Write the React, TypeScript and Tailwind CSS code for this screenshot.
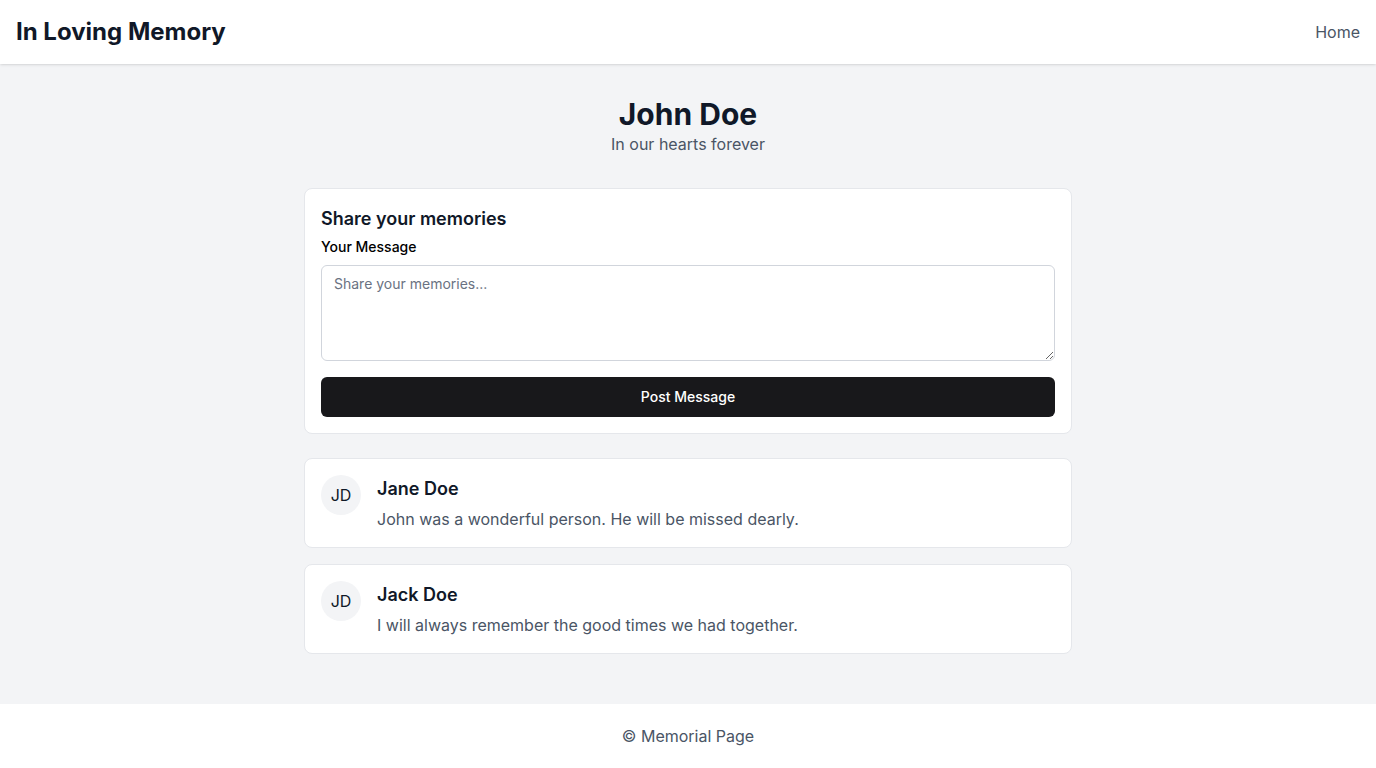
import React, { useState } from 'react';

interface Memory {
  id: number;
  name: string;
  initials: string;
  text: string;
}

const initialMemories: Memory[] = [
  { id: 1, name: 'Jane Doe', initials: 'JD', text: 'John was a wonderful person. He will be missed dearly.' },
  { id: 2, name: 'Jack Doe', initials: 'JD', text: 'I will always remember the good times we had together.' },
];

const App: React.FC = () => {
  const [message, setMessage] = useState<string>('');
  const [memories, setMemories] = useState<Memory[]>(initialMemories);

  const handleSubmit = (e: React.FormEvent) => {
    e.preventDefault();
    if (!message.trim()) return;
    setMemories([...memories, { id: Date.now(), name: 'Guest', initials: 'G', text: message }]);
    setMessage('');
  };

  return (
    <div className="min-h-screen flex flex-col bg-gray-100 font-['Inter',sans-serif]">
      <header className="h-16 bg-white shadow flex items-center justify-between px-4">
        <h1 className="text-2xl font-bold text-gray-900">In Loving Memory</h1>
        <nav>
          <a href="#" className="text-gray-600 hover:text-gray-900">Home</a>
        </nav>
      </header>

      <main className="flex-1 py-8 px-4">
        <div className="max-w-3xl mx-auto">
          <div className="text-center mb-8">
            <h2 className="text-3xl font-bold text-gray-900">John Doe</h2>
            <p className="text-gray-600">In our hearts forever</p>
          </div>

          <form onSubmit={handleSubmit} className="bg-white border border-gray-200 rounded-lg p-4">
            <h3 className="text-lg font-semibold text-gray-900">Share your memories</h3>
            <label htmlFor="message" className="block text-sm font-medium text-black mt-1 mb-2">
              Your Message
            </label>
            <textarea
              id="message"
              value={message}
              onChange={(e) => setMessage(e.target.value)}
              placeholder="Share your memories..."
              className="block w-full h-24 px-3 py-2 text-sm border border-gray-300 rounded-md outline-none placeholder:text-gray-500"
            />
            <button
              type="submit"
              className="mt-4 w-full h-10 rounded-md bg-[#18181b] text-white text-sm font-medium hover:bg-[#27272a]"
            >
              Post Message
            </button>
          </form>

          <div className="mt-6 space-y-4">
            {memories.map((m) => (
              <div key={m.id} className="bg-white border border-gray-200 rounded-lg p-4 flex gap-4">
                <div className="w-10 h-10 shrink-0 rounded-full bg-gray-100 flex items-center justify-center text-gray-900">
                  {m.initials}
                </div>
                <div>
                  <h4 className="text-lg font-semibold text-gray-900">{m.name}</h4>
                  <p className="mt-1 text-gray-600">{m.text}</p>
                </div>
              </div>
            ))}
          </div>
        </div>
      </main>

      <footer className="h-16 bg-white flex items-center justify-center">
        <p className="text-gray-600">© Memorial Page</p>
      </footer>
    </div>
  );
};

export default App;
